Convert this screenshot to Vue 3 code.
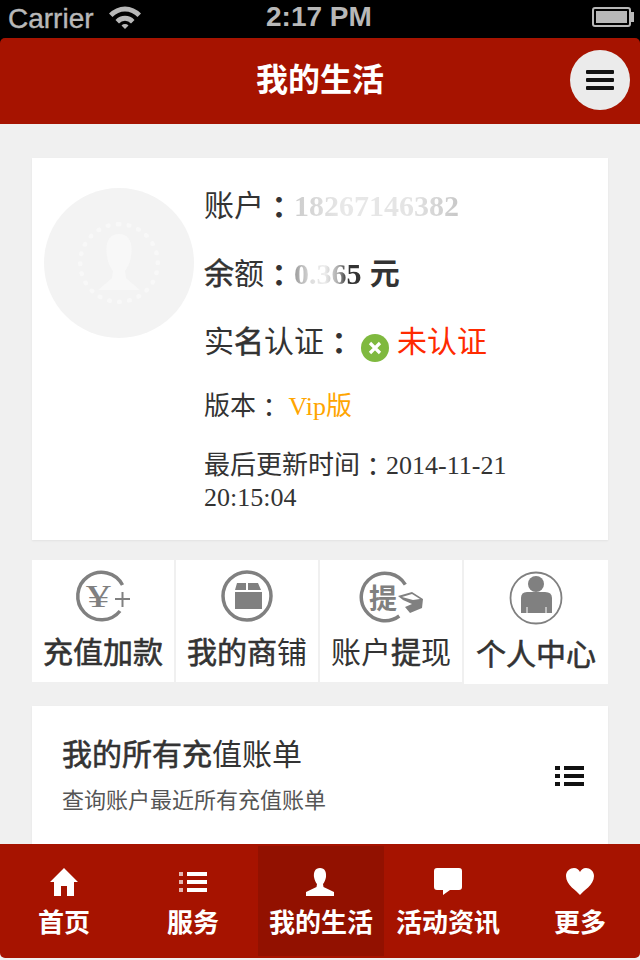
<script setup>
const tabs = [
  { name: '首页', icon: 'home' },
  { name: '服务', icon: 'list' },
  { name: '我的生活', icon: 'user', active: true },
  { name: '活动资讯', icon: 'chat' },
  { name: '更多', icon: 'heart' }
]
</script>

<template>
  <div class="phone">
    <div class="status">
      <span class="carrier">Carrier</span>
      <svg class="wifi" width="32" height="24" viewBox="0 0 32 24">
        <path d="M0 8.500 A22 22 0 0 1 32 8.500 L28.500 12 A17 17 0 0 0 3.500 12Z" fill="#b8b8b8" />
        <path d="M6.500 15 A13 13 0 0 1 25.500 15 L22 18.500 A8 8 0 0 0 10 18.500Z" fill="#b8b8b8" />
        <path d="M16 24 L12.500 20.500 A5 5 0 0 1 19.500 20.500Z" fill="#b8b8b8" />
      </svg>
      <span class="time">2:17 PM</span>
      <span class="battery"><i></i></span>
    </div>

    <header class="head">
      <h1>我的生活</h1>
      <button class="menu">
        <span></span><span></span><span></span>
      </button>
    </header>

    <main class="content">
      <section class="card profile">
        <div class="avatar">
          <div class="avatar-ring">
            <svg width="64" height="70" viewBox="0 0 64 70">
              <path d="M32 6 C21 6 18 16 20 28 C21 36 24 40 26 43 L25 50 L11 62 L53 62 L39 50 L38 43 C40 40 43 36 44 28 C46 16 43 6 32 6Z" fill="#f8f8f8" />
            </svg>
          </div>
        </div>
        <div class="info">
          <p class="row big">账户<span class="colon">：</span><span class="masked">18267146382</span></p>
          <p class="row big"><b>余</b>额<span class="colon">：</span><span class="masked money">0.365</span><b class="yuan"> 元</b></p>
          <p class="row big third">实<b>名</b>认证<span class="colon">：</span>
            <span class="no-icon">
              <svg width="16" height="16" viewBox="0 0 16 16">
                <path d="M3 3 L13 13 M13 3 L3 13" stroke="#fff" stroke-width="3.200" />
              </svg>
            </span>
            <span class="red">未认证</span>
          </p>
          <p class="row small">版本<span class="colon">：</span> <span class="vip">Vip版</span></p>
          <p class="row small last">最后更新时间<span class="colon">：</span>2014-11-21<br />20:15:04</p>
        </div>
      </section>

      <section class="grid">
        <div class="cell">
          <svg width="60" height="56" viewBox="0 0 60 56">
            <path d="M49.500 17 A23.750 23.750 0 1 0 47 43" fill="none" stroke="#808080" stroke-width="3.500" />
            <text class="yen" transform="translate(13 39) scale(1.600 1)">¥</text>
            <path d="M42 31 H57 M49.500 24 V39" stroke="#808080" stroke-width="2" />
          </svg>
          <span class="label"><b>充值加款</b></span>
        </div>
        <div class="cell">
          <svg width="56" height="56" viewBox="0 0 56 56">
            <circle cx="28" cy="28" r="24" fill="none" stroke="#808080" stroke-width="3.500" />
            <path d="M18 15 H27 V22 H16Z M29 15 H39 L42 22 H29Z M16 24 H43 V41 H16Z" fill="#808080" />
          </svg>
          <span class="label"><b>我的商</b>铺</span>
        </div>
        <div class="cell">
          <svg width="66" height="56" viewBox="0 0 66 56">
            <path d="M47.300 16.600 A23.750 23.750 0 1 0 41.250 48" fill="none" stroke="#808080" stroke-width="3.500" />
            <text class="ti" x="11" y="41">提</text>
            <path d="M40 28 L54 24 L65 31 L64 40 L52 45 L47 39 L54 36 L45 32Z" fill="#808080" />
            <path d="M44 29 L54 26 L62 31 L55 32Z" fill="#fff" />
          </svg>
          <span class="label">账户<b>提</b>现</span>
        </div>
        <div class="cell tall">
          <svg width="56" height="56" viewBox="0 0 56 56">
            <circle cx="28" cy="28" r="25.500" fill="none" stroke="#808080" stroke-width="1.800" />
            <circle cx="28" cy="14" r="8" fill="#808080" />
            <path d="M13 43 V28 Q13 22 19 22 H37 Q44 22 44 28 V43Z" fill="#808080" />
            <path d="M19 43 V37 M38 43 V37" stroke="#fff" stroke-width="1" />
          </svg>
          <span class="label"><b>个人中心</b></span>
        </div>
      </section>

      <section class="card bill">
        <div>
          <h2><b>我的所有充</b>值账单</h2>
          <p>查询账户最近所有充值账单</p>
        </div>
        <svg class="bill-icon" width="29" height="20" viewBox="0 0 29 20">
          <path d="M0 0 H5 V4 H0Z M9 0 H29 V4 H9Z M0 8 H5 V12 H0Z M9 8 H29 V12 H9Z M0 16 H5 V20 H0Z M9 16 H29 V20 H9Z" fill="#111" />
        </svg>
      </section>
    </main>

    <nav class="tabs">
      <div v-for="t in tabs" :key="t.name" class="tab" :class="[t.icon, { on: t.active }]">
        <svg width="30" height="28" viewBox="0 0 30 28">
          <path v-if="t.icon === 'home'" d="M15 0 L29 14 H25 V28 H18 V18 H12 V28 H5 V14 H1Z" fill="#fff" />
          <g v-else-if="t.icon === 'list'" fill="#fff">
            <path d="M1 4 H5 V8 H1Z M1 12 H5 V16 H1Z M1 20 H5 V24 H1Z" opacity="0.7" />
            <path d="M9 4 H29 V8 H9Z M9 12 H29 V16 H9Z M9 20 H29 V24 H9Z" />
          </g>
          <path v-else-if="t.icon === 'user'" d="M14 0 C9 0 7.500 4 8 9 C8.500 12 10 15 11 16 L10.500 19 L0 24 V28 H28 V24 L17.500 19 L17 16 C18 15 19.500 12 20 9 C20.500 4 19 0 14 0Z" fill="#fff" />
          <path v-else-if="t.icon === 'chat'" d="M4 0 H26 Q29 0 29 3 V19 Q29 22 26 22 H17 L10 27 L10 22 H4 Q1 22 1 19 V3 Q1 0 4 0Z" fill="#fff" />
          <path v-else d="M15 27 C12 23 1 17 1 8 C1 3 5 0 9 0 C12 0 14 2 15 4 C16 2 18 0 21 0 C25 0 29 3 29 8 C29 17 18 23 15 27Z" fill="#fff" />
        </svg>
        <span>{{ t.name }}</span>
      </div>
    </nav>
  </div>
</template>

<style>
body {
  margin: 0;
  background: #000;
}
</style>

<style scoped>
.phone {
  width: 640px;
  height: 960px;
  position: relative;
  overflow: hidden;
  background: #000;
  font-family: "Liberation Sans", "Noto Sans CJK SC", sans-serif;
}

.status {
  height: 38px;
  display: flex;
  align-items: center;
  color: #b8b8b8;
  font-size: 28px;
  position: relative;
}

.carrier {
  margin-left: 8px;
  -webkit-text-stroke: 0.4px #b8b8b8;
}

.wifi {
  margin-left: 15px;
  margin-top: -4px;
}

.time {
  position: absolute;
  left: 266px;
  top: 1px;
  font-weight: bold;
}

.battery {
  position: absolute;
  left: 592px;
  top: 7px;
  width: 39px;
  height: 20px;
  border: 2px solid #b8b8b8;
  border-radius: 3px;
  padding: 2px;
  box-sizing: border-box;
}

.battery::after {
  content: "";
  position: absolute;
  left: 37px;
  top: 3px;
  width: 3px;
  height: 10px;
  background: #b8b8b8;
}

.battery i {
  display: block;
  height: 100%;
  background: #b8b8b8;
}

.head {
  height: 86px;
  background: #a61300;
  border-radius: 5px 5px 0 0;
  display: flex;
  justify-content: center;
  position: relative;
}

.head h1 {
  margin: 20px 0 0;
  color: #fff;
  font-size: 32px;
  line-height: 44px;
  font-weight: bold;
  height: 44px;
}

.menu {
  position: absolute;
  right: 10px;
  top: 12px;
  width: 60px;
  height: 60px;
  border: none;
  border-radius: 50%;
  background: #ebebeb;
  padding: 0;
  display: flex;
  flex-direction: column;
  align-items: center;
  justify-content: center;
  gap: 4px;
}

.menu span {
  width: 28px;
  height: 4px;
  border-radius: 1px;
  background: #111;
}

.content {
  height: 836px;
  background: #f0f0f0;
  padding: 34px 32px 0;
  box-sizing: border-box;
  overflow: hidden;
}

.card {
  background: #fff;
  box-shadow: 0 1px 2px rgba(0, 0, 0, 0.06);
}

.profile {
  height: 382px;
  display: flex;
  padding: 30px 0 0 12px;
  box-sizing: border-box;
}

.avatar {
  width: 150px;
  height: 150px;
  border-radius: 50%;
  background: #f3f3f3;
  display: flex;
  align-items: center;
  justify-content: center;
  flex-shrink: 0;
}

.avatar-ring {
  width: 82px;
  height: 82px;
  border-radius: 50%;
  border: 5px dotted #f8f8f8;
  box-sizing: border-box;
  display: flex;
  align-items: center;
  justify-content: center;
}

.avatar-ring svg {
  flex-shrink: 0;
}

.info {
  margin-left: 10px;
  margin-top: -3px;
  color: #333;
  width: 320px;
}

.row {
  margin: 0;
}

.row b,
.label b,
.bill h2 b {
  font-weight: normal;
  -webkit-text-stroke: 0.6px currentColor;
}

.big {
  font-size: 30px;
  height: 68px;
  line-height: 40px;
  white-space: nowrap;
}

.third {
  height: 69px;
}

.colon {
  font-family: "Noto Sans CJK TC", sans-serif;
  font-weight: bold;
  vertical-align: -2px;
}

.small .colon {
  font-weight: normal;
}

.masked {
  font-family: "Liberation Serif", serif;
  font-weight: bold;
  color: transparent;
  background: linear-gradient(90deg, #ccc 0%, #e8e8e8 30%, #e4e4e4 70%, #c8c8c8 100%);
  -webkit-background-clip: text;
  background-clip: text;
}

.masked.money {
  background: linear-gradient(90deg, #999 0%, #ddd 25%, #eee 45%, #aaa 65%, #333 78%, #333 100%);
  -webkit-background-clip: text;
  background-clip: text;
}

.row b.yuan {
  color: #333;
  font-weight: bold;
  -webkit-text-stroke: 0;
}

.no-icon {
  display: inline-flex;
  width: 28px;
  height: 28px;
  margin-left: 7px;
  border-radius: 50%;
  background: #7fb93f;
  align-items: center;
  justify-content: center;
  vertical-align: -4px;
}

.red {
  color: #ff2a00;
  margin-left: 8px;
}

.small {
  font-family: "Liberation Serif", "Noto Sans CJK SC", serif;
  font-size: 26px;
  line-height: 32px;
}

.small:not(.last) {
  height: 59px;
}

.vip {
  color: #ffa500;
}

.grid {
  margin-top: 20px;
  display: flex;
  gap: 2px;
  align-items: flex-start;
}

.cell {
  width: 142px;
  height: 122px;
  background: #fff;
  display: flex;
  flex-direction: column;
  align-items: center;
  padding-top: 8px;
  box-sizing: border-box;
  color: #333;
}

.cell.tall {
  height: 124px;
  width: 144px;
  padding-top: 10px;
}

.cell svg {
  flex-shrink: 0;
}

.yen {
  font-family: "Liberation Serif", serif;
  font-size: 31px;
  fill: #808080;
}

.ti {
  font-family: "Noto Sans CJK SC", sans-serif;
  font-size: 28px;
  font-weight: bold;
  fill: #808080;
}

.label {
  font-size: 30px;
  margin-top: 11px;
  line-height: 36px;
}

.bill {
  margin-top: 22px;
  height: 200px;
  display: flex;
  padding: 30px 24px 0 30px;
  box-sizing: border-box;
  align-items: flex-start;
  justify-content: space-between;
}

.bill h2 {
  margin: 0;
  font-size: 30px;
  font-weight: normal;
  color: #333;
  line-height: 38px;
}

.bill p {
  margin: 8px 0 0;
  font-size: 22px;
  color: #555;
}

.bill-icon {
  margin-top: 30px;
}

.tabs {
  position: absolute;
  left: 0;
  right: 0;
  top: 844px;
  height: 114px;
  background: #a61300;
  border-radius: 0 0 5px 5px;
  display: flex;
}

.tab {
  width: 128px;
  display: flex;
  flex-direction: column;
  align-items: center;
  padding-top: 24px;
  box-sizing: border-box;
  color: #fff;
  font-size: 26px;
  font-weight: bold;
}

.tab.list {
  width: 130px;
}

.tab.heart {
  padding-left: 8px;
}

.tab span {
  margin-top: 11px;
  line-height: 32px;
}

.tab.on {
  width: 126px;
  background: #921100;
  margin-top: 2px;
  padding-top: 22px;
  height: 110px;
}
</style>
